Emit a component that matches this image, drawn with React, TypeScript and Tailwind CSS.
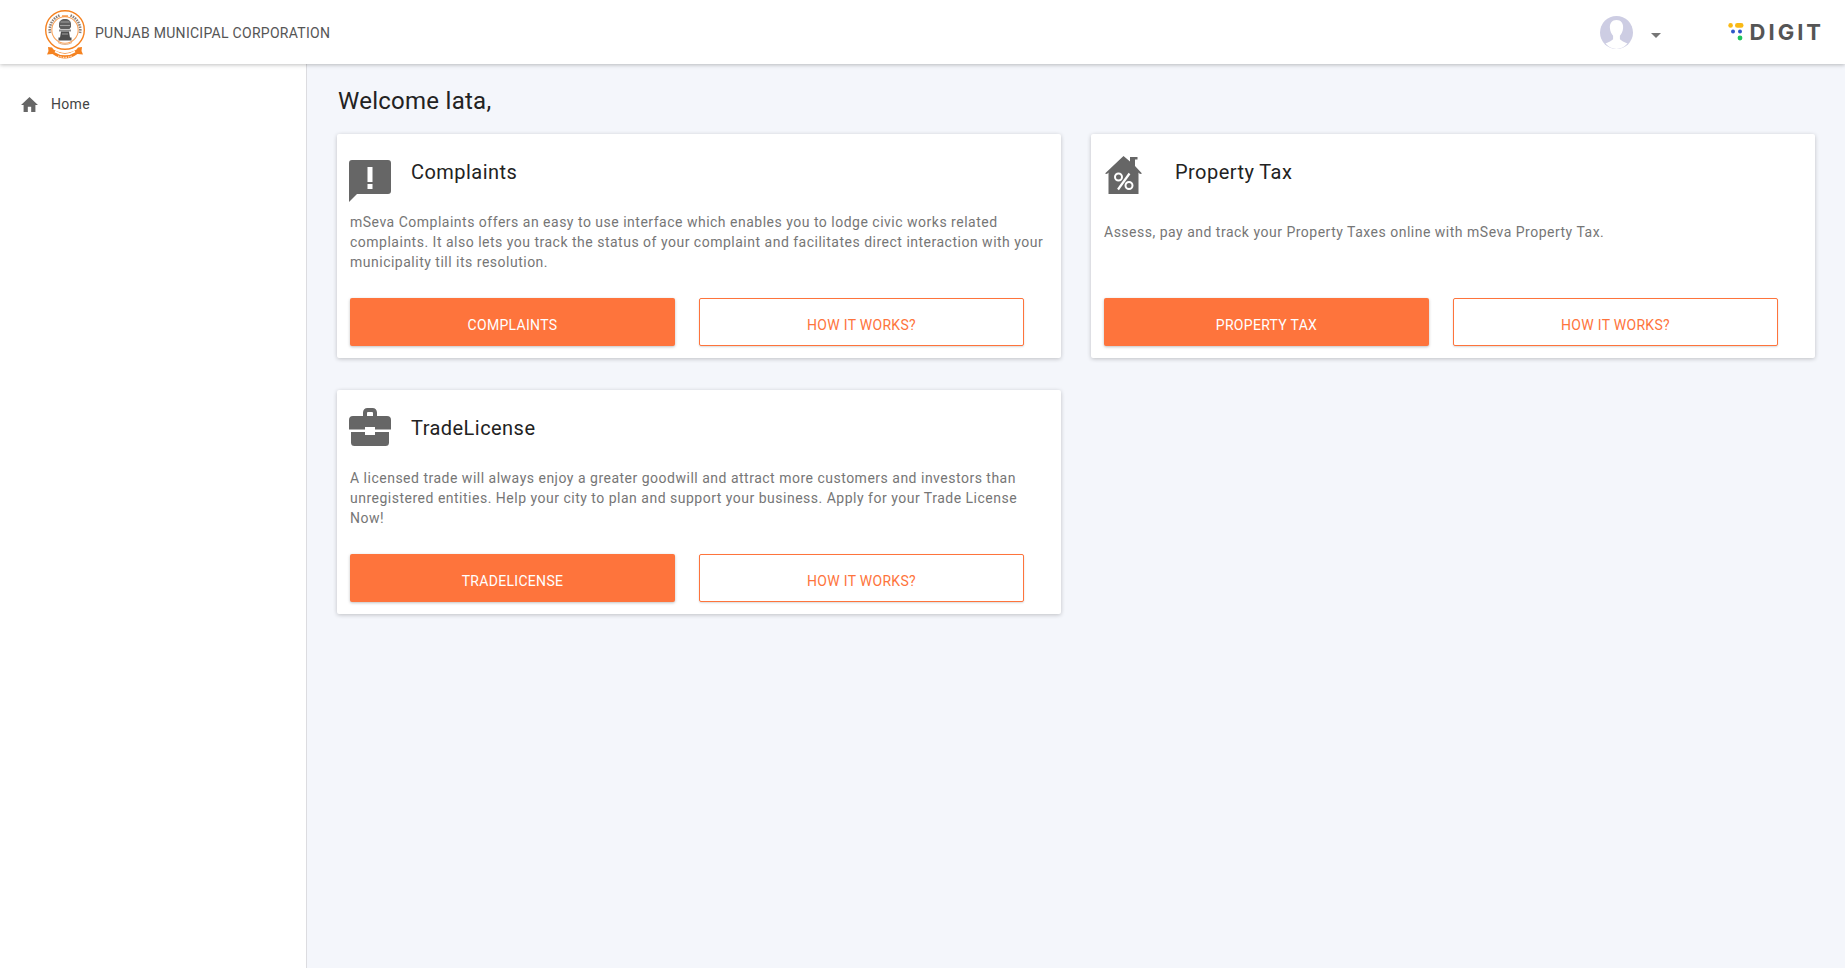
import React from "react";

const font = { fontFamily: "Roboto, sans-serif" };

function Emblem() {
  return (
    <svg width="42" height="52" viewBox="0 0 42 52" className="block">
      <circle cx="21" cy="21" r="19.300" fill="#fff" stroke="#f58220" strokeWidth="1.400" />
      <circle cx="21" cy="21" r="13.200" fill="#fff" stroke="#f9a45c" strokeWidth="1.100" />
      <path d="M6 24A15.500 15.500 0 0 1 16 6.300" fill="none" stroke="#8d8078" strokeWidth="2.600" strokeDasharray="1.500 1" />
      <path d="M36 24A15.500 15.500 0 0 0 26 6.300" fill="none" stroke="#8d8078" strokeWidth="2.600" strokeDasharray="1.500 1" />
      <path d="M18 7h6" stroke="#f58220" strokeWidth="1.200" />
      <path d="M15 15c0-3 2.500-5 6-5s6 2 6 5v3l-1.500 2h-9L15 18z" fill="#5e5e5e" />
      <path d="M16.500 13h9M16 16.500h10" stroke="#a9a9a9" strokeWidth="0.900" />
      <path d="M15 20.500h12v2H15z" fill="#8a8a8a" />
      <path d="M17 22.500h8l1 6h1.500v3h-13v-3H16z" fill="#4e4e4e" />
      <path d="M18 25h6" stroke="#b5b5b5" strokeWidth="0.800" />
      <path d="M14 33.500c4 2.500 10 2.500 14 0" stroke="#d8a070" strokeWidth="0.900" fill="none" />
      <path d="M4 38l4 .5 1.500 2c7 4.500 16 4.500 23 0l1.500-2 4-.5-.5 4 1.500 3.500-5.500-.5c-8.500 6-16.500 6-25 0L3 45.500 4.500 42z" fill="#f58220" />
      <path d="M11 42.500c6 4 14 4 20 0" stroke="#fff" strokeWidth="1.600" fill="none" />
      <path d="M14 47c4 1.800 10 1.800 14 0" stroke="#fff" strokeWidth="0.900" strokeDasharray="1.500 1" fill="none" />
    </svg>
  );
}

function Avatar() {
  return (
    <svg width="33" height="33" viewBox="0 0 33 33" className="block">
      <circle cx="16.500" cy="16.500" r="16.500" fill="#cdcde3" />
      <path d="M16.500 4c-4.500 0-7 3.400-6.600 8 .3 3.600 1.600 6 3.200 7.800v3.400c-1.300 1.500-4.400 3-7.600 4.200A16.500 16.500 0 0 0 16.500 33a16.500 16.500 0 0 0 11-5.600c-3.200-1.200-6.300-2.700-7.600-4.200v-3.400c1.600-1.800 2.900-4.200 3.200-7.800.4-4.600-2.100-8-6.600-8z" fill="#fff" />
    </svg>
  );
}

function DigitMark() {
  return (
    <svg width="16" height="18" viewBox="0 0 16 18" className="block">
      <circle cx="2.600" cy="2.400" r="2.300" fill="#f9b916" />
      <rect x="7" y="0.100" width="8.500" height="4.600" rx="2.300" fill="#f9b916" />
      <circle cx="5" cy="8.500" r="2" fill="#3056c8" />
      <circle cx="12" cy="8.500" r="2" fill="#3056c8" />
      <circle cx="12" cy="15" r="2.400" fill="#1fc35b" />
    </svg>
  );
}

function ComplaintIcon() {
  return (
    <svg width="42" height="42" viewBox="0 0 42 42" className="block">
      <path d="M3 0h36a3 3 0 0 1 3 3v28a3 3 0 0 1-3 3H8l-8 8V3a3 3 0 0 1 3-3z" fill="#666" />
      <rect x="18.500" y="7" width="5" height="15" fill="#fff" />
      <rect x="18.500" y="24" width="5" height="5" fill="#fff" />
    </svg>
  );
}

function PropertyIcon() {
  return (
    <svg width="37" height="38" viewBox="0 0 37 38" className="block">
      <path d="M18.500 0L25 5.500V1h7.500v2.500H30v6.500l7 7.500-2 .5-1.500-1.500V38H3.500V16.500L2 18l-2-.5z" fill="#666" />
      <circle cx="13.500" cy="21" r="3.500" fill="none" stroke="#fff" strokeWidth="2" />
      <circle cx="24" cy="29.500" r="3.500" fill="none" stroke="#fff" strokeWidth="2" />
      <path d="M24.500 17.500L13 33.500" stroke="#fff" strokeWidth="2.200" />
    </svg>
  );
}

function BriefcaseIcon() {
  return (
    <svg width="42" height="38" viewBox="0 0 42 38" className="block">
      <path d="M14 8V4.500C14 1.800 15.800 0 18.500 0h5C26.200 0 28 1.800 28 4.500V8h-4V5a1 1 0 0 0-1-1h-4a1 1 0 0 0-1 1v3z" fill="#666" />
      <path d="M4 8h34a4 4 0 0 1 4 4v9.500H26V19h-10v2.500H0V12a4 4 0 0 1 4-4z" fill="#666" />
      <path d="M2 24h14v3h10v-3h14v10.500a3.500 3.500 0 0 1-3.500 3.500h-31A3.500 3.500 0 0 1 2 34.500z" fill="#666" />
    </svg>
  );
}

type CardProps = {
  icon: React.ReactNode;
  iconClass: string;
  title: string;
  textClass: string;
  text: string[];
  action: string;
};

function Card({ icon, iconClass, title, textClass, text, action }: CardProps) {
  return (
    <div className="h-[224px] w-[724px] rounded-[2px] bg-white pl-[13px] shadow-[0_1px_4px_rgba(0,0,0,0.22)]">
      <div className="flex h-[76px] items-start">
        <div className={iconClass}>{icon}</div>
        <div className="mt-[26px] text-[20px] leading-[24px] tracking-[0.45px] text-[#222]">{title}</div>
      </div>
      <div className={`h-[88px] text-[14px] leading-[20px] tracking-[0.5px] text-[#767676] ${textClass}`}>
        {text.map((line) => (
          <div key={line} className="whitespace-nowrap">{line}</div>
        ))}
      </div>
      <div className="flex gap-[24px]">
        <button className="flex h-[48px] w-[325px] items-center justify-center rounded-[2px] bg-[#fe743c] pt-[6px] text-[14px] tracking-[0.3px] text-white shadow-[0_1px_3px_rgba(0,0,0,0.25)]">
          {action}
        </button>
        <button className="flex h-[48px] w-[325px] items-center justify-center rounded-[2px] border border-[#fe743c] bg-white pt-[6px] text-[14px] tracking-[0.3px] text-[#fe743c] shadow-[0_1px_2px_rgba(0,0,0,0.15)]">
          HOW IT WORKS?
        </button>
      </div>
    </div>
  );
}

export default function App() {
  return (
    <div className="flex h-[968px] w-[1845px] flex-col overflow-hidden bg-[#f4f6fb]" style={font}>
      <header className="relative z-10 flex h-[64px] shrink-0 items-center bg-white pl-[44px] pr-[21px] shadow-[0_1px_4px_rgba(0,0,0,0.25)]">
        <div className="mt-[5px]"><Emblem /></div>
        <div className="ml-[9px] mt-[2px] text-[14px] tracking-[0.28px] text-[#555]">PUNJAB MUNICIPAL CORPORATION</div>
        <div className="ml-auto flex items-center">
          <Avatar />
          <div className="ml-[18px] mt-[7px] h-0 w-0 border-x-[5px] border-t-[5px] border-x-transparent border-t-[#767676]" />
          <div className="ml-[67px] mt-[-1px]"><DigitMark /></div>
          <div className="ml-[6px] text-[22px] font-bold leading-none tracking-[3px] text-[#555]" style={{ fontFamily: "Inter, sans-serif" }}>DIGIT</div>
        </div>
      </header>
      <div className="flex flex-1">
        <aside className="w-[307px] shrink-0 border-r border-[#dcdce0] bg-white pl-[21px] pt-[30px]">
          <div className="flex items-center">
            <svg width="17" height="15" viewBox="0 0 18 16" className="block">
              <path d="M7.200 16v-5.600h3.600V16h4.500V8.500H18L9 0 0 8.500h2.700V16z" fill="#666" />
            </svg>
            <span className="ml-[13px] text-[14px] tracking-[0.3px] text-[#444]">Home</span>
          </div>
        </aside>
        <main className="flex-1 pl-[30px]">
          <h1 className="pl-[1px] pt-[21px] text-[24px] leading-[32px] tracking-[0.26px] text-[#222]">Welcome lata,</h1>
          <div className="mt-[17px] grid grid-cols-[724px_724px] gap-x-[30px] gap-y-[32px]">
            <Card
              icon={<ComplaintIcon />}
              iconClass="ml-[-1px] mt-[26px] w-[62px]"
              title="Complaints"
              textClass="pt-[2px]"
              text={[
                "mSeva Complaints offers an easy to use interface which enables you to lodge civic works related",
                "complaints. It also lets you track the status of your complaint and facilitates direct interaction with your",
                "municipality till its resolution.",
              ]}
              action="COMPLAINTS"
            />
            <Card
              icon={<PropertyIcon />}
              iconClass="ml-[1px] mt-[22px] w-[70px]"
              title="Property Tax"
              textClass="pt-[12px]"
              text={["Assess, pay and track your Property Taxes online with mSeva Property Tax."]}
              action="PROPERTY TAX"
            />
            <Card
              icon={<BriefcaseIcon />}
              iconClass="ml-[-1px] mt-[18px] w-[62px]"
              title="TradeLicense"
              textClass="pt-[2px]"
              text={[
                "A licensed trade will always enjoy a greater goodwill and attract more customers and investors than",
                "unregistered entities. Help your city to plan and support your business. Apply for your Trade License",
                "Now!",
              ]}
              action="TRADELICENSE"
            />
          </div>
        </main>
      </div>
    </div>
  );
}
